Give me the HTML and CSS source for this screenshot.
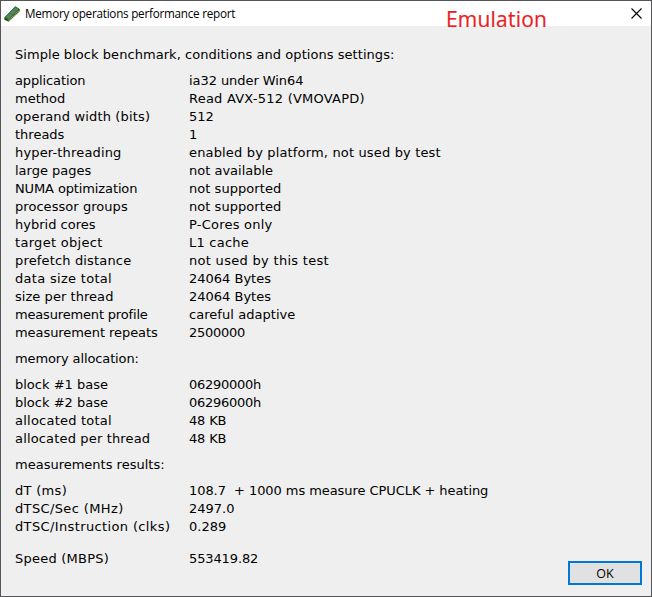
FILE: index.html
```html
<!DOCTYPE html>
<html lang="en">
<head>
<meta charset="utf-8">
<title>Memory operations performance report</title>
<link rel="stylesheet" href="styles.css">
</head>
<body>
<div class="window">
  <header class="titlebar">
    <svg class="app-icon" width="16" height="16" viewBox="0 0 16 16">
      <path d="M.3 11.500 11.300.3l4.400 2.600v2.300L4.700 15.700l-4.200-1.900z" fill="#17491f"/>
      <path d="M1 11.200 11.400.8l3.700 2.300L4.500 13.900z" fill="#22923a"/>
      <path d="M2.300 11.100 5.500 7.900l2.500 1.500-3.200 3.200zM6.300 7.100l3-3 2.500 1.500-3 3zM10 3.400l1.400-1.400 2.400 1.500-1.300 1.300z" fill="#77707c"/>
      <path d="M4.700 14.800 15.300 4.300" stroke="#c8c04a" stroke-width="1.100" stroke-dasharray="1.200 .6"/>
    </svg>
    <h1 class="title">Memory operations performance report</h1>
    <svg class="close" width="11" height="11" viewBox="0 0 11 11"><path d="M.5.5l10 10M10.500.5l-10 10" stroke="#000" stroke-width="1.100"/></svg>
    <span class="mode">Emulation</span>
  </header>
  <main class="report">
    <h2 class="heading track-1">Simple block benchmark, conditions and options settings:</h2>
    <dl class="rows">
      <dt class="tight-1">application</dt><dd class="tight-0">ia32 under Win64</dd>
      <dt>method</dt><dd class="track-3">Read AVX-512 (VMOVAPD)</dd>
      <dt class="track-2">operand width (bits)</dt><dd>512</dd>
      <dt>threads</dt><dd>1</dd>
      <dt class="track-2">hyper-threading</dt><dd class="track-2">enabled by platform, not used by test</dd>
      <dt>large pages</dt><dd>not available</dd>
      <dt class="tight-1">NUMA optimization</dt><dd class="track-1">not supported</dd>
      <dt class="track-1">processor groups</dt><dd class="track-1">not supported</dd>
      <dt>hybrid cores</dt><dd class="track-3">P-Cores only</dd>
      <dt class="track-4">target object</dt><dd class="track-3">L1 cache</dd>
      <dt class="track-2">prefetch distance</dt><dd class="track-4">not used by this test</dd>
      <dt class="track-4">data size total</dt><dd>24064 Bytes</dd>
      <dt class="track-1">size per thread</dt><dd>24064 Bytes</dd>
      <dt class="tight-2">measurement profile</dt><dd class="track-1">careful adaptive</dd>
      <dt class="tight-0">measurement repeats</dt><dd class="tight-3">2500000</dd>
    </dl>
    <h2 class="heading tight-1">memory allocation:</h2>
    <dl class="rows">
      <dt>block #1 base</dt><dd class="tight-3">06290000h</dd>
      <dt>block #2 base</dt><dd class="tight-3">06296000h</dd>
      <dt class="track-3">allocated total</dt><dd class="tight-2">48 KB</dd>
      <dt class="track-2">allocated per thread</dt><dd class="tight-2">48 KB</dd>
    </dl>
    <h2 class="heading">measurements results:</h2>
    <dl class="rows">
      <dt class="track-4">dT (ms)</dt><dd class="tight-0">108.7&nbsp; + 1000 ms measure CPUCLK + heating</dd>
      <dt class="track-5">dTSC/Sec (MHz)</dt><dd>2497.0</dd>
      <dt class="track-5">dTSC/Instruction (clks)</dt><dd>0.289</dd>
    </dl>
    <dl class="rows speed">
      <dt class="track-3">Speed (MBPS)</dt><dd class="tight-1">553419.82</dd>
    </dl>
  </main>
  <footer class="actions"><button class="ok">OK</button></footer>
</div>
</body>
</html>
```
FILE: styles.css
```css
* { box-sizing: border-box; margin: 0; padding: 0; }
body {
  width: 652px;
  height: 597px;
  overflow: hidden;
  font: 13px/18px "DejaVu Sans", sans-serif;
  font-variant-ligatures: none;
  color: #000;
}
.window {
  position: relative;
  display: flex;
  flex-direction: column;
  width: 652px;
  height: 597px;
  border: 1px solid #555458;
  background: #efefef;
}
.titlebar {
  display: flex;
  align-items: center;
  flex: none;
  height: 25px;
  padding: 0 9px 0 3px;
  background: #fff;
}
.title {
  flex: 1;
  margin: -2px 0 0 5px;
  font: 11.7px/18px "Open Sans", sans-serif;
  letter-spacing: -0.24px;
  white-space: nowrap;
}
.mode {
  position: absolute;
  left: 445px;
  top: 5px;
  font: 21px/27px "Open Sans", sans-serif;
  letter-spacing: 0.2px;
  color: #ed1c24;
  -webkit-text-stroke: 0.2px #ed1c24;
}
.report { flex: 1; padding: 20px 14px 0; }
.heading { font-size: 13px; font-weight: 400; line-height: 18px; }
.rows {
  display: grid;
  grid-template-columns: 174px 1fr;
  grid-auto-rows: 18px;
  margin: 8px 0;
  white-space: nowrap;
}
.speed { margin-top: 14px; }

/* Letter tracking steps */
.tight-0 { letter-spacing: -0.065px; }
.tight-1 { letter-spacing: -0.12px; }
.tight-2 { letter-spacing: -0.17px; }
.tight-3 { letter-spacing: -0.28px; }
.track-1 { letter-spacing: 0.05px; }
.track-2 { letter-spacing: 0.16px; }
.track-3 { letter-spacing: 0.23px; }
.track-4 { letter-spacing: 0.3px; }
.track-5 { letter-spacing: 0.37px; }

.actions { position: absolute; right: 9px; bottom: 11px; }
.ok {
  display: block;
  width: 74px;
  height: 24px;
  border: 2px solid #0078d7;
  background: #e1e1e1;
  font: 12.500px/22px "Open Sans", sans-serif;
  color: #000;
}
```
